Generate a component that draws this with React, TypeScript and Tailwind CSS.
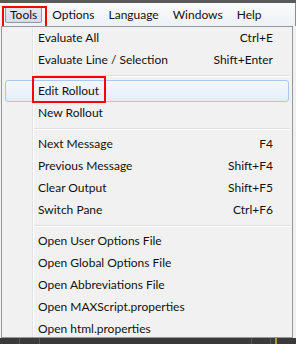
import React from "react";

type Item = { label: string; shortcut?: string; active?: boolean } | "sep";

const items: Item[] = [
  { label: "Evaluate All", shortcut: "Ctrl+E" },
  { label: "Evaluate Line / Selection", shortcut: "Shift+Enter" },
  "sep",
  { label: "Edit Rollout", active: true },
  { label: "New Rollout" },
  "sep",
  { label: "Next Message", shortcut: "F4" },
  { label: "Previous Message", shortcut: "Shift+F4" },
  { label: "Clear Output", shortcut: "Shift+F5" },
  { label: "Switch Pane", shortcut: "Ctrl+F6" },
  "sep",
  { label: "Open User Options File" },
  { label: "Open Global Options File" },
  { label: "Open Abbreviations File" },
  { label: "Open MAXScript.properties" },
  { label: "Open html.properties" },
];

const menus = ["Options", "Language", "Windows", "Help"];

export default function App() {
  return (
    <div className="w-[296px] h-[344px] overflow-hidden bg-[#f0f0f0] flex flex-col text-[12px] text-[#111] font-['Lato','Open_Sans',sans-serif] leading-none">
      {/* dark strip above the menu bar */}
      <div className="h-[3px] bg-[#5a5a5a] shrink-0" />

      {/* menu bar */}
      <div className="relative h-[23px] shrink-0 flex items-center bg-gradient-to-b from-[#fafbfc] to-[#eef1f5] border-r border-[#8c8c8c]">
        <div className="ml-[5px] mt-[1px] h-[16px] px-[4px] flex items-center rounded-[2px] border border-[#8e99a6] bg-gradient-to-b from-[#e3e8ee] to-[#d6dde6]">
          Tools
        </div>
        <div className="flex gap-[14px] ml-[10px]">
          {menus.map((m) => (
            <span key={m}>{m}</span>
          ))}
        </div>
        {/* red annotation */}
        <div className="absolute left-[2px] top-[3px] w-[45px] h-[22px] border-2 border-[#ff0000]" />
      </div>

      {/* dropdown */}
      <div className="relative ml-[1px] w-[292px] h-[312px] shrink-0 border border-[#979797] bg-[#f1f1f1] flex flex-col">
        {/* gutter line */}
        <div className="absolute left-[30px] top-0 bottom-0 w-[2px] border-l border-[#e2e3e3] bg-white" />
        {items.map((it, i) =>
          it === "sep" ? (
            <div key={i} className="h-[9px] shrink-0 flex items-center pl-[32px] pr-[2px]">
              <div className="w-full h-[2px] border-t border-[#e0e0e0] bg-white" />
            </div>
          ) : (
            <div
              key={i}
              className={
                "relative h-[22px] shrink-0 mx-[3px] flex items-center justify-between pl-[32px] pr-[15px] rounded-[3px] " +
                (it.active
                  ? "border border-[#a9c8ee] bg-gradient-to-b from-[#f3f7fc] to-[#e4edf8]"
                  : "border border-transparent")
              }
            >
              <span>{it.label}</span>
              {it.shortcut && <span>{it.shortcut}</span>}
              {it.active && (
                <div className="absolute left-[26px] top-[-5px] w-[74px] h-[27px] border-2 border-[#ff0000]" />
              )}
            </div>
          )
        )}
      </div>

      {/* viewport strip below */}
      <div className="flex-1 bg-[#3a3a3a] flex">
        <div className="w-[20px] border-r border-[#575757]" />
        <div className="w-[20px] border-r border-[#575757]" />
        <div className="w-[212px] border-r border-[#575757]" />
        <div className="w-[19px] border-r border-[#575757]" />
        <div className="w-[6px] border-r-2 border-[#b59a2b]" />
      </div>
    </div>
  );
}
